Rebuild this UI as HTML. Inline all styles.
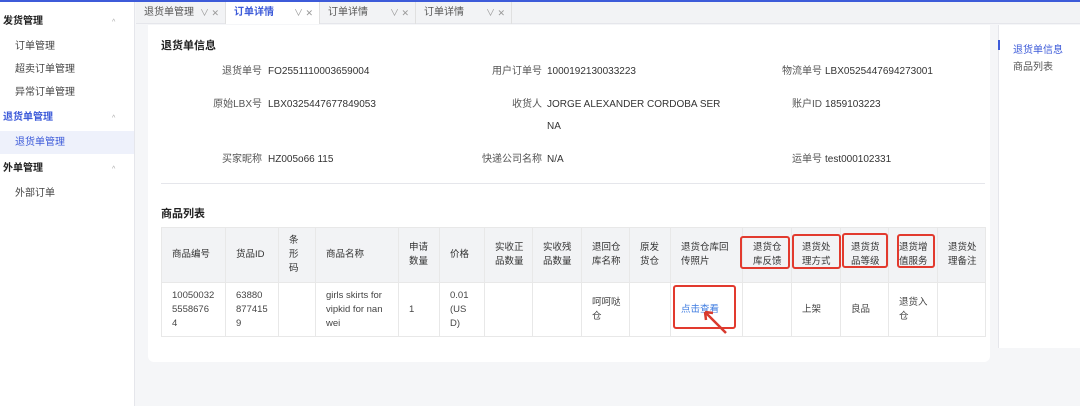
<!DOCTYPE html>
<html><head><meta charset="utf-8"><style>
*{box-sizing:border-box;margin:0;padding:0}
body{width:1080px;height:406px;overflow:hidden;background:#f5f6f8;font-family:"Liberation Sans","Noto Sans CJK SC",sans-serif;font-size:10px;color:#333;position:relative}
.top{position:absolute;left:0;top:0;width:1080px;height:2px;background:#3d5bd9}
.side{position:absolute;left:0;top:2px;width:135px;height:404px;background:#fff;border-right:1px solid #e5e6eb}
.side div{position:absolute;left:0;width:134px;height:23px;line-height:23px}
.g{font-weight:bold;color:#222;padding-left:3px}
.g:after{content:"^";position:absolute;left:112px;top:1px;font-size:7px;color:#aaa;font-weight:normal}
.i{padding-left:15px;color:#444}
.tabs{position:absolute;left:136px;top:2px;width:944px;height:22px;background:#f2f3f5;border-bottom:1px solid #e5e6eb}
.tab{position:absolute;top:0;height:22px;line-height:22px;padding-left:8px;color:#555;border-right:1px solid #e0e0e0}
.tab span{position:absolute;right:6px;color:#999;font-size:9px}
.card{position:absolute;left:148px;top:25px;width:842px;height:337px;background:#fff;border-radius:0 0 6px 6px}
.panel{position:absolute;left:998px;top:25px;width:82px;height:323px;background:#fff;border-left:1px solid #e5e6eb}
h3{position:absolute;font-size:11px;font-weight:bold;color:#222}
.l,.v{line-height:14px}
.l{position:absolute;text-align:right;color:#555}
.v{position:absolute;color:#333}
table{position:absolute;left:13px;top:202px;border-collapse:collapse;font-size:9.5px}
td,th{border:1px solid #e8e8e8;padding:0 0 0 10px;text-align:left;vertical-align:middle;line-height:14px;font-weight:normal}
th{background:#f2f3f5;height:55px;color:#333}
td{height:54px;color:#444}
.red{position:absolute;border:2px solid #e23a2e;border-radius:3px}
</style></head><body>
<div class="top"></div>
<div class="side">
<div class="g" style="top:8px">发货管理</div>
<div class="i" style="top:33px">订单管理</div>
<div class="i" style="top:56px">超卖订单管理</div>
<div class="i" style="top:79px">异常订单管理</div>
<div class="g" style="top:104px;color:#3d5bd9">退货单管理</div>
<div class="i" style="top:129px;background:#eef1fb;color:#3d5bd9">退货单管理</div>
<div class="g" style="top:155px">外单管理</div>
<div class="i" style="top:180px">外部订单</div>
</div>
<div class="tabs">
<div class="tab" style="left:0;width:90px">退货单管理<span>∨ ✕</span></div>
<div class="tab" style="left:90px;width:94px;background:#fff;color:#3d5bd9;font-weight:bold">订单详情<span style="font-weight:normal">∨ ✕</span></div>
<div class="tab" style="left:184px;width:96px">订单详情<span>∨ ✕</span></div>
<div class="tab" style="left:280px;width:96px">订单详情<span>∨ ✕</span></div>
</div>
<div class="card">
<h3 style="left:13px;top:12px">退货单信息</h3>
<div class="l" style="left:0;width:114px;top:40px">退货单号</div><div class="v" style="left:120px;top:40px">FO2551110003659004</div>
<div class="l" style="left:280px;width:114px;top:40px">用户订单号</div><div class="v" style="left:399px;top:40px">1000192130033223</div>
<div class="l" style="left:560px;width:114px;top:40px">物流单号</div><div class="v" style="left:677px;top:40px">LBX0525447694273001</div>
<div class="l" style="left:0;width:114px;top:73px">原始LBX号</div><div class="v" style="left:120px;top:73px">LBX0325447677849053</div>
<div class="l" style="left:280px;width:114px;top:73px">收货人</div><div class="v" style="left:399px;top:73px">JORGE ALEXANDER CORDOBA SER</div>
<div class="v" style="left:399px;top:95px">NA</div>
<div class="l" style="left:560px;width:114px;top:73px">账户ID</div><div class="v" style="left:677px;top:73px">1859103223</div>
<div class="l" style="left:0;width:114px;top:128px">买家昵称</div><div class="v" style="left:120px;top:128px">HZ005o66 115</div>
<div class="l" style="left:280px;width:114px;top:128px">快递公司名称</div><div class="v" style="left:399px;top:128px">N/A</div>
<div class="l" style="left:560px;width:114px;top:128px">运单号</div><div class="v" style="left:677px;top:128px">test000102331</div>
<div style="position:absolute;left:13px;top:158px;width:824px;height:1px;background:#e5e6eb"></div>
<h3 style="left:13px;top:180px">商品列表</h3>
<table>
<tr><th style="width:64px">商品编号</th><th style="width:53px">货品ID</th><th style="width:37px">条<br>形<br>码</th><th style="width:83px">商品名称</th><th style="width:41px">申请<br>数量</th><th style="width:45px">价格</th><th style="width:48px">实收正<br>品数量</th><th style="width:49px">实收残<br>品数量</th><th style="width:48px">退回仓<br>库名称</th><th style="width:41px">原发<br>货仓</th><th style="width:72px">退货仓库回<br>传照片</th><th style="width:49px">退货仓<br>库反馈</th><th style="width:49px">退货处<br>理方式</th><th style="width:48px">退货货<br>品等级</th><th style="width:49px">退货增<br>值服务</th><th style="width:48px">退货处<br>理备注</th></tr>
<tr><td>10050032<br>5558676<br>4</td><td>63880<br>877415<br>9</td><td></td><td>girls skirts for<br>vipkid for nan<br>wei</td><td>1</td><td>0.01<br>(US<br>D)</td><td></td><td></td><td>呵呵哒<br>仓</td><td></td><td style="color:#3d7be0">点击查看</td><td></td><td>上架</td><td>良品</td><td>退货入<br>仓</td><td></td></tr>
</table>
<div class="red" style="left:592px;top:211px;width:50px;height:33px"></div>
<div class="red" style="left:644px;top:209px;width:49px;height:35px"></div>
<div class="red" style="left:694px;top:208px;width:46px;height:35px"></div>
<div class="red" style="left:749px;top:209px;width:38px;height:34px"></div>
<div class="red" style="left:525px;top:260px;width:63px;height:44px"></div>
<svg style="position:absolute;left:552px;top:282px" width="30" height="30"><path d="M26 26 L5 5 M5 5 L13 6 M5 5 L6 13" stroke="#d83a2e" stroke-width="2.5" fill="none"/></svg>
</div>
<div class="panel">
<div style="position:absolute;left:-1px;top:15px;width:2px;height:10px;background:#3d5bd9"></div>
<div style="position:absolute;left:14px;top:16px;color:#3d5bd9">退货单信息</div>
<div style="position:absolute;left:14px;top:33px;color:#555">商品列表</div>
</div>
</body></html>
